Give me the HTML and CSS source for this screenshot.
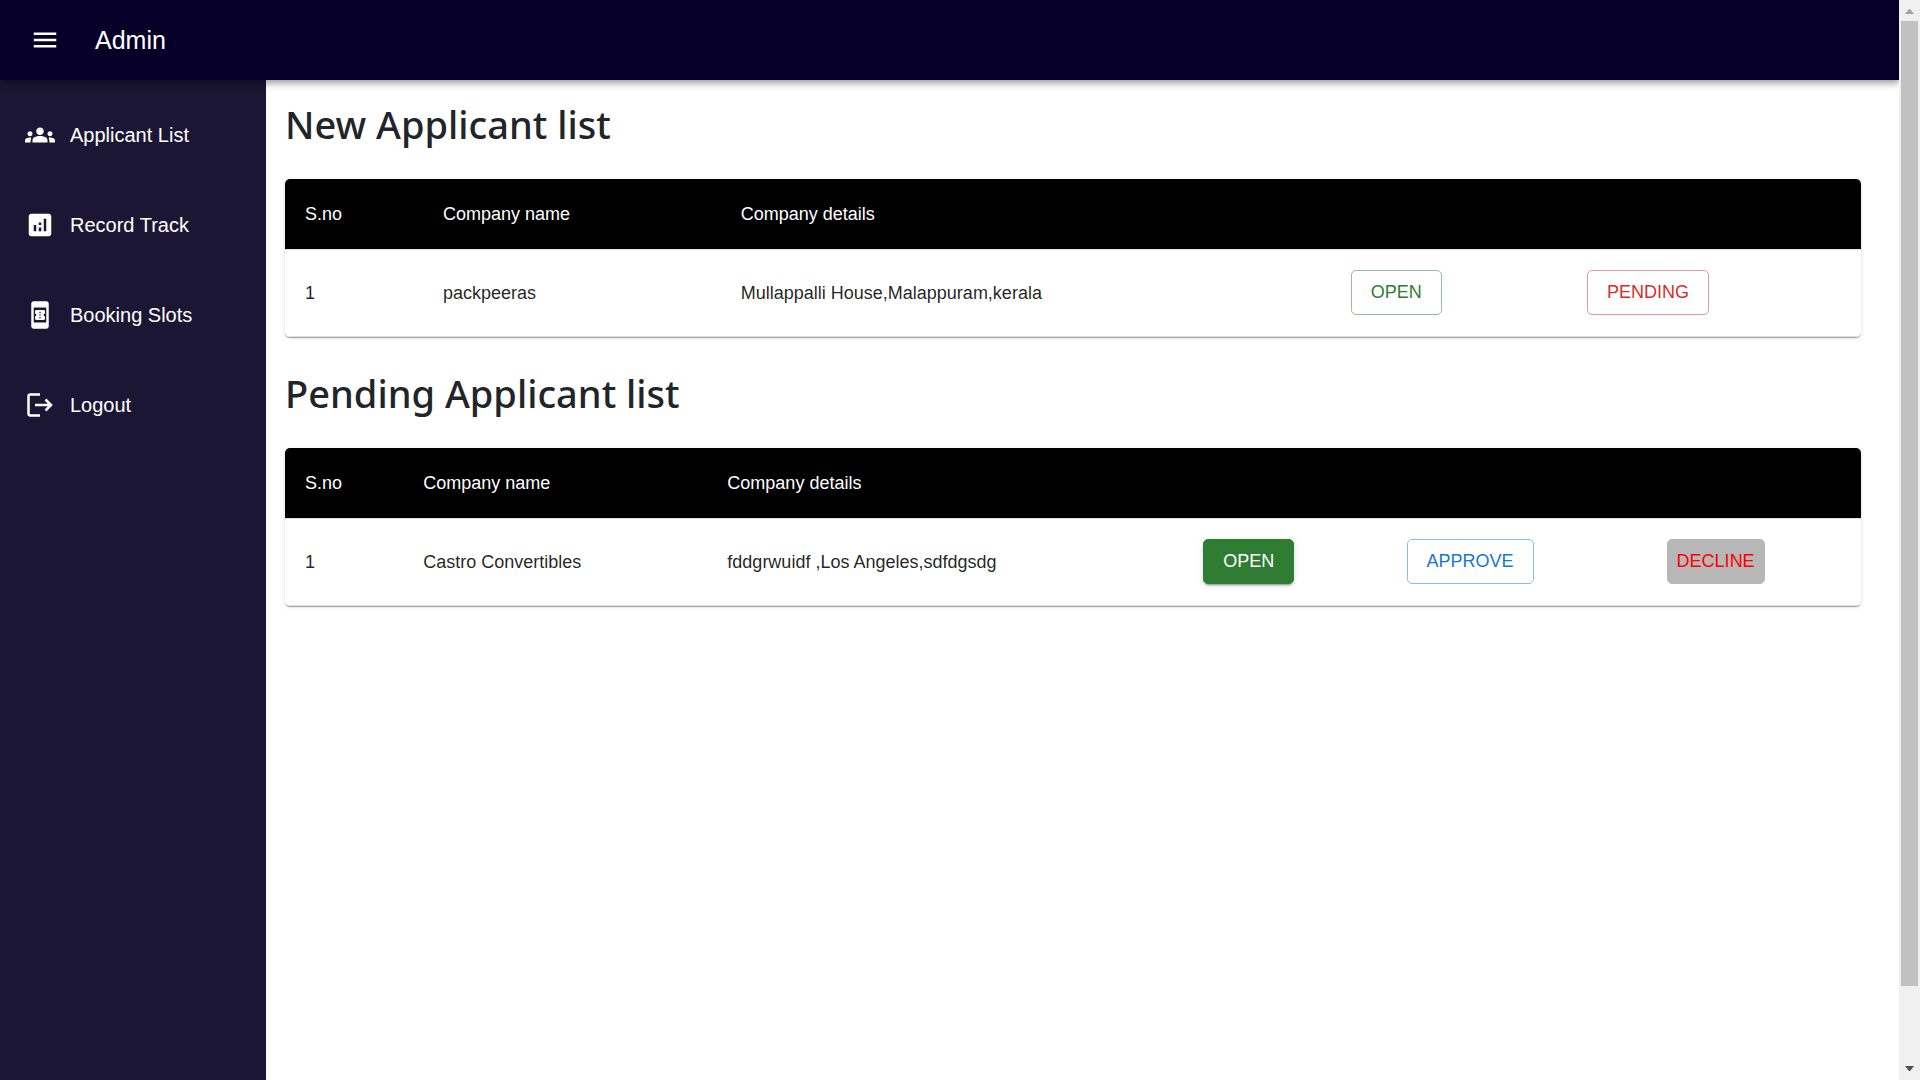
FILE: index.html
```html
<!DOCTYPE html>
<html lang="en">
<head>
  <meta charset="utf-8">
  <meta name="viewport" content="width=device-width, initial-scale=1">
  <title>Admin</title>
  <link rel="stylesheet" href="styles.css">
</head>
<body>
  <div class="window">
    <div class="app">
      <header class="appbar">
        <button class="menu-button" type="button" aria-label="Open menu">
          <svg class="icon" viewBox="0 0 24 24" aria-hidden="true"><path d="M3 18h18v-2H3v2zm0-5h18v-2H3v2zm0-7v2h18V6H3z"/></svg>
        </button>
        <span class="brand">Admin</span>
      </header>
      <div class="body">
        <nav class="sidebar">
          <a class="nav-link" href="#applicants">
            <svg class="icon" viewBox="0 0 24 24" aria-hidden="true"><path d="M4 13c1.1 0 2-.9 2-2s-.9-2-2-2-2 .9-2 2 .9 2 2 2zm1.13 1.1c-.37-.06-.74-.1-1.13-.1-.99 0-1.93.21-2.78.58C.48 14.9 0 15.62 0 16.43V18h4.5v-1.61c0-.83.23-1.61.63-2.29zM20 13c1.1 0 2-.9 2-2s-.9-2-2-2-2 .9-2 2 .9 2 2 2zm4 3.43c0-.81-.48-1.53-1.22-1.85-.85-.37-1.79-.58-2.78-.58-.39 0-.76.04-1.13.1.4.68.63 1.46.63 2.29V18H24v-1.57zm-7.76-2.78c-1.17-.52-2.61-.9-4.24-.9-1.63 0-3.07.39-4.24.9C6.68 14.13 6 15.21 6 16.39V18h12v-1.61c0-1.18-.68-2.26-1.76-2.74zM9 9c0 1.66 1.34 3 3 3s3-1.34 3-3-1.34-3-3-3-3 1.34-3 3z"/></svg>
            Applicant List
          </a>
          <a class="nav-link" href="#records">
            <svg class="icon" viewBox="0 0 24 24" aria-hidden="true"><path d="M19 3H5c-1.1 0-2 .9-2 2v14c0 1.1.9 2 2 2h14c1.1 0 2-.9 2-2V5c0-1.1-.9-2-2-2zM9 17H7v-5h2v5zm4 0h-2v-3h2v3zm0-5h-2v-2h2v2zm4 5h-2V7h2v10z"/></svg>
            Record Track
          </a>
          <a class="nav-link" href="#slots">
            <svg class="icon" viewBox="0 0 24 24" aria-hidden="true"><path d="M17 1H7c-1.1 0-2 .9-2 2v18c0 1.1.9 2 2 2h10c1.1 0 2-.9 2-2V3c0-1.1-.9-2-2-2zM7 18V6h10v12H7zm9-7V9.14C16 8.51 15.55 8 15 8H9c-.55 0-1 .51-1 1.14V11c.55 0 1 .45 1 1s-.45 1-1 1v1.86c0 .63.45 1.14 1 1.14h6c.55 0 1-.51 1-1.14V13c-.55 0-1-.45-1-1s.45-1 1-1zm-3.5 3.5h-1v-1h1v1zm0-2h-1v-1h1v1zm0-2h-1v-1h1v1z"/></svg>
            Booking Slots
          </a>
          <a class="nav-link" href="#logout">
            <svg class="icon icon-line" viewBox="0 0 30 30" aria-hidden="true"><path d="M15 4.500H5.500a2 2 0 0 0-2 2v17a2 2 0 0 0 2 2H15M10 15h16M20.500 9.500 26 15l-5.500 5.500"/></svg>
            Logout
          </a>
        </nav>
        <main class="content">
          <section>
            <h1 class="title">New Applicant list</h1>
            <table class="list">
              <colgroup><col class="new-no"><col class="new-name"><col class="new-details"><col class="new-open"><col></colgroup>
              <thead>
                <tr><th>S.no</th><th>Company name</th><th>Company details</th><th></th><th></th></tr>
              </thead>
              <tbody>
                <tr>
                  <td>1</td><td>packpeeras</td><td>Mullappalli House,Malappuram,kerala</td>
                  <td><button class="btn btn-open" type="button">OPEN</button></td>
                  <td><button class="btn btn-pending" type="button">PENDING</button></td>
                </tr>
              </tbody>
            </table>
          </section>
          <section>
            <h1 class="title">Pending Applicant list</h1>
            <table class="list">
              <colgroup><col class="pend-no"><col class="pend-name"><col class="pend-details"><col class="pend-open"><col class="pend-approve"><col></colgroup>
              <thead>
                <tr><th>S.no</th><th>Company name</th><th>Company details</th><th></th><th></th><th></th></tr>
              </thead>
              <tbody>
                <tr>
                  <td>1</td><td>Castro Convertibles</td><td>fddgrwuidf ,Los Angeles,sdfdgsdg</td>
                  <td><button class="btn btn-solid" type="button">OPEN</button></td>
                  <td><button class="btn btn-approve" type="button">APPROVE</button></td>
                  <td><button class="btn btn-decline" type="button">DECLINE</button></td>
                </tr>
              </tbody>
            </table>
          </section>
        </main>
      </div>
    </div>
    <div class="scrollbar" aria-hidden="true">
      <svg class="arrow arrow-up" viewBox="0 0 21 21"><path d="M6 14h9l-4-5h-1z"/></svg>
      <div class="track"><div class="thumb"></div></div>
      <svg class="arrow arrow-down" viewBox="0 0 21 21"><path d="M6 7h9l-4 5h-1z"/></svg>
    </div>
  </div>
</body>
</html>
```
FILE: styles.css
```css
* {
  box-sizing: border-box;
}

body {
  margin: 0;
  background: #fff;
  color: #212529;
  font-family: "Liberation Sans", Arial, sans-serif;
  font-size: 18px;
}

.window {
  display: flex;
  min-height: 100vh;
}

.app {
  flex: 1;
  display: flex;
  flex-direction: column;
  overflow: hidden;
}

.appbar {
  position: relative;
  z-index: 1;
  display: flex;
  align-items: center;
  gap: 20px;
  height: 80px;
  padding: 0 15px;
  background: #060028;
  color: #fff;
  box-shadow: 0 2px 5px rgba(0, 0, 0, 0.2), 0 5px 6px rgba(0, 0, 0, 0.14), 0 1px 12px rgba(0, 0, 0, 0.12);
}

.menu-button {
  display: flex;
  padding: 15px;
  border: 0;
  background: none;
  color: inherit;
}

.icon {
  flex: none;
  width: 30px;
  height: 30px;
  fill: currentColor;
}

.icon-line {
  fill: none;
  stroke: currentColor;
  stroke-width: 2.5;
}

.brand {
  font-size: 25px;
}

.body {
  flex: 1;
  display: flex;
}

.sidebar {
  flex: none;
  width: 266px;
  padding-top: 10px;
  background: #1c1635;
}

.nav-link {
  display: flex;
  align-items: center;
  gap: 15px;
  height: 90px;
  padding: 0 25px;
  color: #fff;
  font-size: 20px;
  text-decoration: none;
}

.content {
  flex: 1;
  display: flex;
  flex-direction: column;
  gap: 32px;
  padding: 20px 38px 20px 19px;
}

.title {
  margin: 0 0 31px;
  font-family: "Segoe UI", "Noto Sans", sans-serif;
  font-size: 38px;
  font-weight: 500;
  line-height: 48px;
}

.list {
  width: 100%;
  table-layout: fixed;
  border-spacing: 0;
  border-radius: 5px;
  overflow: hidden;
  box-shadow: 0 2px 1px -1px rgba(0, 0, 0, 0.2), 0 1px 1px rgba(0, 0, 0, 0.14), 0 1px 4px rgba(0, 0, 0, 0.12);
}

.list th,
.list td {
  padding: 20px;
  border-bottom: 1px solid #e0e0e0;
  text-align: left;
  line-height: 30px;
  color: rgba(0, 0, 0, 0.87);
}

.list th {
  background: #000;
  background-clip: padding-box;
  color: #fff;
  font-weight: 400;
}

.list td {
  padding: 20px 0 21px 20px;
  line-height: 28px;
}

.new-no { width: 8.75%; }
.new-name { width: 18.9%; }
.new-details { width: 38.7%; }
.new-open { width: 15%; }

.pend-no { width: 7.5%; }
.pend-name { width: 19.3%; }
.pend-details { width: 30.2%; }
.pend-open { width: 12.9%; }
.pend-approve { width: 16.5%; }

.btn {
  display: block;
  height: 45px;
  padding: 0 19px 1px;
  border: 1px solid;
  border-radius: 5px;
  background: #fff;
  font-family: inherit;
  font-size: 18px;
}

.btn-open {
  border-color: #96be98;
  color: #2e7d32;
}

.btn-pending {
  border-color: #e99797;
  color: #d32f2f;
}

.btn-solid {
  border-color: #2e7d32;
  background: #2e7d32;
  color: #fff;
  box-shadow: 0 4px 1px -3px rgba(0, 0, 0, 0.2), 0 2px 2px rgba(0, 0, 0, 0.14), 0 1px 6px rgba(0, 0, 0, 0.12);
}

.btn-approve {
  border-color: #8cbae8;
  color: #1976d2;
}

.btn-decline {
  padding: 0 9px 1px;
  border-color: #b7b7b7;
  background: #b7b7b7;
  color: #f00;
}

.scrollbar {
  flex: none;
  display: flex;
  flex-direction: column;
  width: 21px;
  background: #f0f0f0;
}

.arrow {
  flex: none;
  width: 21px;
  height: 21px;
}

.arrow-up { fill: #a3a3a3; }
.arrow-down { fill: #505050; }

.track {
  flex: 1;
  display: flex;
  flex-direction: column;
  padding: 0 2px;
}

.thumb {
  flex: 0 0 93%;
  background: #c1c1c1;
}
```
